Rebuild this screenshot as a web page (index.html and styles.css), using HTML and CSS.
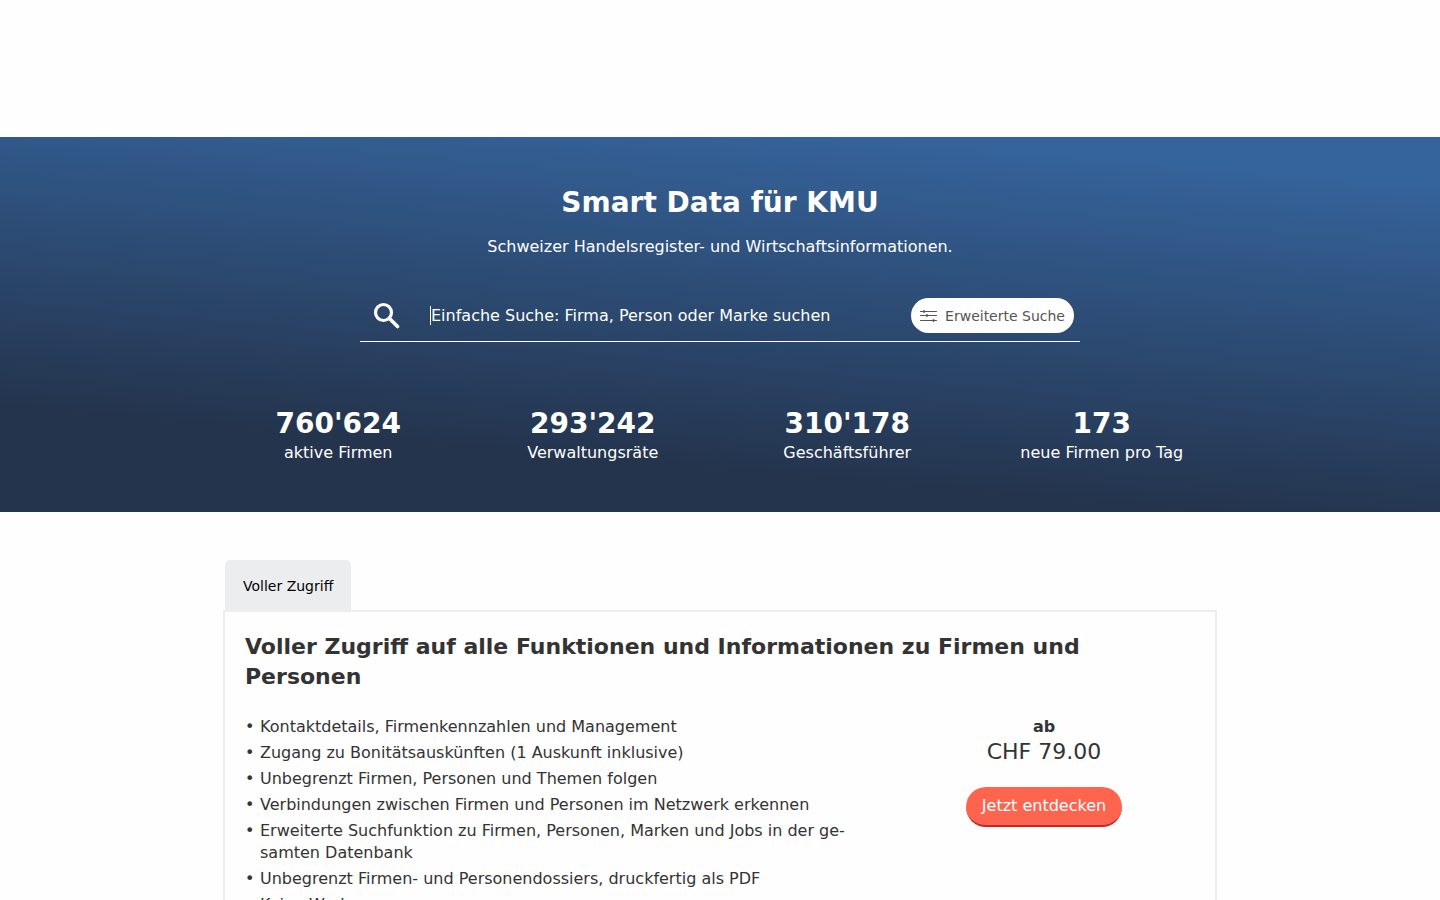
FILE: index.html
```
<!DOCTYPE html>
<html lang="de">
<head>
    <meta charset="UTF-8">
    <meta name="viewport" content="width=device-width, initial-scale=1.0">
    <title>Smart Data für KMU</title>
    <link rel="stylesheet" href="styles.css">
</head>
<body>

    <header class="site-header"></header>

    <main>
        <section class="hero">
            <h1>Smart Data für KMU</h1>
            <p class="hero-text">Schweizer Handelsregister- und Wirtschaftsinformationen.</p>

            <form class="search" role="search">
                <button type="submit" class="search-submit" aria-label="Suchen">
                    <svg width="28" height="28" viewBox="0 0 28 28" fill="none" stroke="currentColor" stroke-linecap="round">
                        <circle cx="11.5" cy="10.5" r="8" stroke-width="3.2"/>
                        <path d="M17.5 16.5L25.5 24.5" stroke-width="3.6"/>
                    </svg>
                </button>
                <input type="text" id="search" class="search-input" aria-label="Einfache Suche" placeholder="Einfache Suche: Firma, Person oder Marke suchen" autocomplete="off">
                <button type="button" class="search-advanced">
                    <svg width="17" height="12" viewBox="0 0 17 12" fill="none" stroke="currentColor" stroke-linecap="round">
                        <path d="M.5 1.5H16.5M.5 5.5H16.5M.5 10.5H16.5"/>
                        <path d="M4 1V2M7 5V6M13.5 10V11" stroke-width="1.8"/>
                    </svg>
                    Erweiterte Suche
                </button>
            </form>

            <ul class="stats">
                <li><strong>760'624</strong>aktive Firmen</li>
                <li><strong>293'242</strong>Verwaltungsräte</li>
                <li><strong>310'178</strong>Geschäftsführer</li>
                <li><strong>173</strong>neue Firmen pro Tag</li>
            </ul>
        </section>

        <section class="offer">
            <button type="button" class="tab">Voller Zugriff</button>
            <div class="panel">
                <h2>Voller Zugriff auf alle Funktionen und Informationen zu Firmen und Personen</h2>
                <div class="panel-content">
                    <ul class="features">
                        <li>Kontaktdetails, Firmenkennzahlen und Management</li>
                        <li>Zugang zu Bonitätsauskünften (1 Auskunft inklusive)</li>
                        <li>Unbegrenzt Firmen, Personen und Themen folgen</li>
                        <li>Verbindungen zwischen Firmen und Personen im Netzwerk erkennen</li>
                        <li>Erweiterte Suchfunktion zu Firmen, Personen, Marken und Jobs in der ge&shy;samten Datenbank</li>
                        <li>Unbegrenzt Firmen- und Personendossiers, druckfertig als PDF</li>
                        <li>Keine Werbung</li>
                    </ul>
                    <div class="price">
                        <strong>ab</strong>
                        <span class="amount">CHF 79.00</span>
                        <a href="#" class="btn">Jetzt entdecken</a>
                    </div>
                </div>
            </div>
        </section>
    </main>

</body>
</html>
```

FILE: styles.css
```
* {
    box-sizing: border-box;
}

body {
    margin: 0;
    background-color: #fefefe;
    color: #333;
    font-family: "DejaVu Sans", sans-serif;
    font-size: 16px;
    line-height: 22px;
}

button,
input {
    font-family: inherit;
}

ul {
    list-style: none;
    margin: 0;
    padding: 0;
}

.site-header {
    height: 137px;
}

.hero {
    background: linear-gradient(185deg, #35639b 10%, #24344d 79%);
    color: #fff;
    padding: 45px 20px 48px;
    text-align: center;
}

.hero h1 {
    margin: 0;
    font-size: 28px;
    line-height: 42px;
}

.hero-text {
    margin: 12px 0 32px;
}

.search {
    display: flex;
    align-items: center;
    max-width: 720px;
    height: 52px;
    margin: 0 auto;
    padding: 0 6px 0 12px;
    border-bottom: 1px solid #fff;
}

.search-submit {
    display: flex;
    padding: 0;
    border: 0;
    background: none;
    color: #fff;
}

/* thin line marks where to type */
.search-input {
    flex: 1;
    min-width: 0;
    margin-left: 30px;
    padding: 0;
    border: 0;
    border-left: 1px solid #fff;
    outline: 0;
    background: none;
    color: #fff;
    font-size: 16px;
}

.search-input::placeholder {
    color: #fff;
    opacity: 1;
}

.search-advanced {
    display: flex;
    align-items: center;
    gap: 8px;
    height: 35px;
    padding: 0 9px;
    border: 0;
    border-radius: 18px;
    background-color: #fff;
    color: #555;
    font-size: 14px;
}

.stats {
    display: grid;
    grid-template-columns: repeat(4, 1fr);
    max-width: 1018px;
    margin: 64px auto 0;
}

.stats strong {
    display: block;
    font-size: 28px;
    line-height: 36px;
}

.offer {
    max-width: 994px;
    margin: 48px auto;
}

.tab {
    display: block;
    height: 50px;
    margin-left: 2px;
    padding: 2px 18px 0;
    border: 0;
    border-radius: 5px 5px 0 0;
    background-color: #ebedef;
    color: #000;
    font-size: 14px;
}

.panel {
    padding: 20px;
    border: 2px solid #ebedef;
}

.panel h2 {
    margin: 0 0 24px;
    font-size: 22px;
    line-height: 30px;
}

.panel-content {
    display: grid;
    grid-template-columns: 2fr 1fr;
    gap: 44px;
}

.features li {
    position: relative;
    margin-bottom: 4px;
    padding-left: 15px;
}

.features li::before {
    content: "•";
    position: absolute;
    left: 0;
}

.price {
    text-align: center;
}

.price strong,
.amount {
    display: block;
}

.amount {
    font-size: 22px;
    line-height: 28px;
}

.btn {
    display: inline-block;
    margin-top: 21px;
    padding: 8px 16px;
    border-bottom: 2px solid #c1272d;
    border-radius: 20px;
    background-color: #ff644e;
    color: #fff;
    text-decoration: none;
}
```
